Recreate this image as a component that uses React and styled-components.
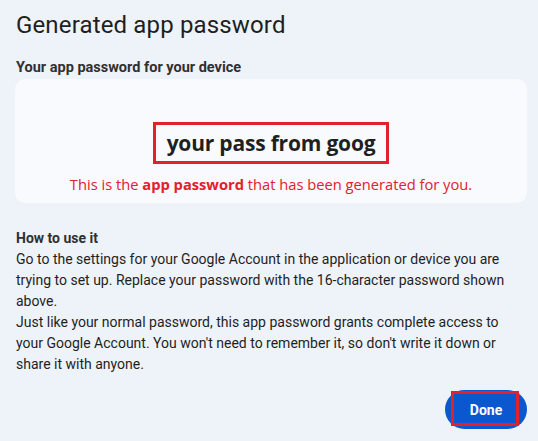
import styled, { createGlobalStyle } from "styled-components";

const GlobalStyle = createGlobalStyle`
  html, body {
    margin: 0;
    background: #eef2f9;
  }
  body {
    font-family: Roboto, "Liberation Sans", Arial, sans-serif;
    color: #1f1f1f;
  }
`;

const Dialog = styled.div`
  width: 538px;
  height: 441px;
  box-sizing: border-box;
  padding: 8px 11px 0 15px;
  display: flex;
  flex-direction: column;
`;

const Title = styled.h1`
  margin: 0;
  font-size: 24px;
  line-height: 34px;
  font-weight: 400;
  letter-spacing: 0.15px;
  color: #1f1f1f;
  padding-left: 1px;
`;

const Label = styled.div`
  margin-top: 16px;
  font-size: 14.5px;
  line-height: 20px;
  font-weight: 700;
  color: #303030;
  padding-left: 1px;
`;

const Card = styled.div`
  margin-top: 1px;
  height: 124px;
  background: #f8fafd;
  border-radius: 10px;
  display: flex;
  flex-direction: column;
  align-items: center;
  padding-top: 43px;
  box-sizing: border-box;
`;

const Password = styled.div`
  border: 3px solid #e3202c;
  padding: 0 11px;
  height: 42px;
  box-sizing: border-box;
  display: flex;
  align-items: center;
  font-family: "Open Sans", sans-serif;
  font-size: 21px;
  font-weight: 700;
  color: #1f1f1f;
  letter-spacing: -0.2px;
`;

const Note = styled.p`
  margin: 10px 0 0;
  font-family: "Open Sans", sans-serif;
  font-size: 14.7px;
  line-height: 20px;
  color: #e3202c;
  b {
    font-weight: 700;
  }
`;

const HowTo = styled.div`
  margin-top: 25px;
  font-size: 14px;
  line-height: 21px;
  color: #1f1f1f;
  padding-left: 1px;
  h2 {
    margin: 0;
    font-size: 14px;
    line-height: 21px;
    font-weight: 700;
    color: #303030;
  }
  p {
    margin: 0;
  }
`;

const Footer = styled.div`
  margin-top: auto;
  padding-bottom: 12px;
  display: flex;
  justify-content: flex-end;
`;

const DoneButton = styled.button`
  position: relative;
  width: 82px;
  height: 39px;
  border: none;
  border-radius: 20px;
  background: #0b57d0;
  color: #fff;
  font-family: Roboto, sans-serif;
  font-size: 14px;
  font-weight: 700;
  cursor: pointer;
  &::after {
    content: "";
    position: absolute;
    left: 6px;
    right: 8px;
    top: 1px;
    bottom: 3px;
    border: 3px solid #e3202c;
  }
`;

const App = () => {
  return (
    <>
      <GlobalStyle />
      <Dialog>
        <Title>Generated app password</Title>
        <Label>Your app password for your device</Label>
        <Card>
          <Password>your pass from goog</Password>
          <Note>
            This is the <b>app password</b> that has been generated for you.
          </Note>
        </Card>
        <HowTo>
          <h2>How to use it</h2>
          <p>
            Go to the settings for your Google Account in the application or device you are
            trying to set up. Replace your password with the 16-character password shown
            above.
          </p>
          <p>
            Just like your normal password, this app password grants complete access to
            your Google Account. You won't need to remember it, so don't write it down or
            share it with anyone.
          </p>
        </HowTo>
        <Footer>
          <DoneButton>Done</DoneButton>
        </Footer>
      </Dialog>
    </>
  );
};

export default App;
